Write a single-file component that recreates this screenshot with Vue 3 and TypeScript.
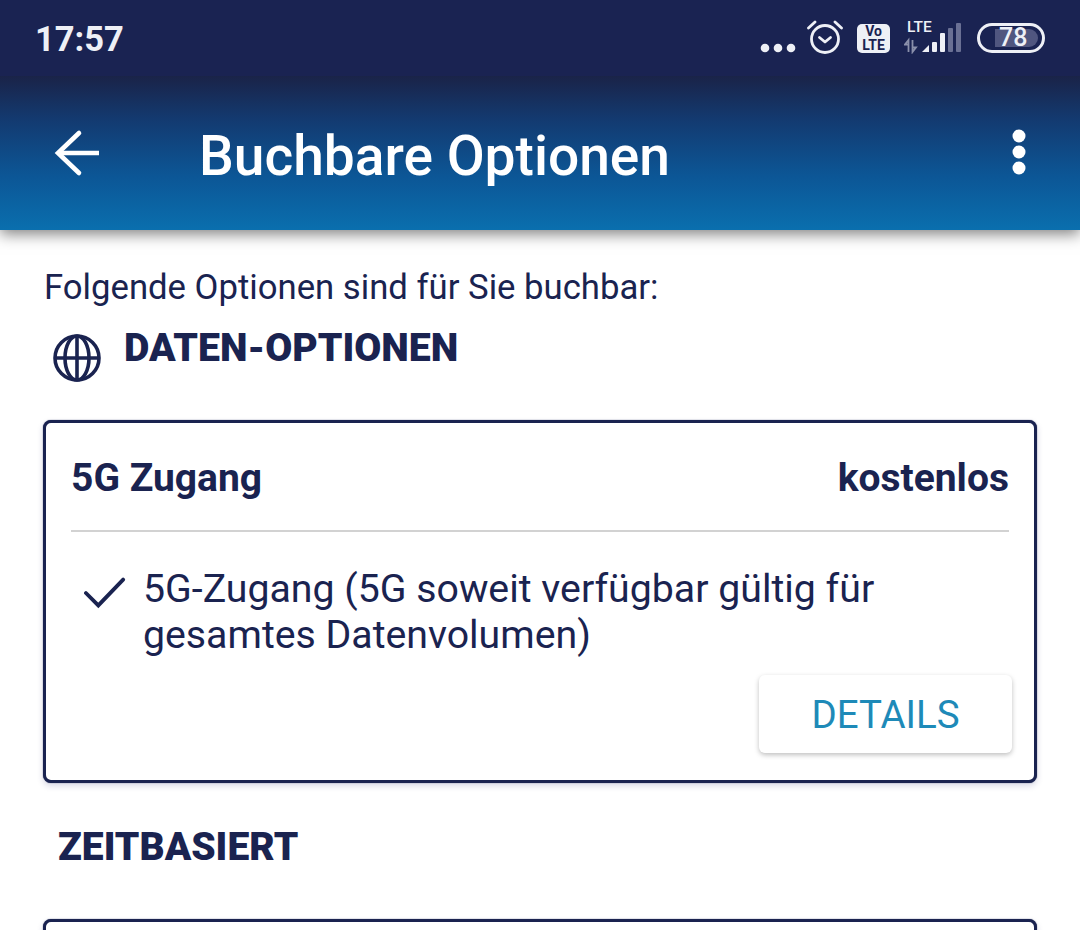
<template>
  <div class="screen">
    <div class="status-bar">
      <span class="clock">17:57</span>
      <div class="status-icons">
        <svg class="dots" width="36" height="12" viewBox="0 0 36 12"><circle cx="5" cy="6" r="4.3" /><circle cx="18" cy="6" r="4.3" /><circle cx="31" cy="6" r="4.3" /></svg>
        <svg class="alarm" width="36" height="36" viewBox="0 0 36 36" fill="none" stroke="#eef0f6" stroke-width="2.8" stroke-linecap="round" stroke-linejoin="round">
          <circle cx="18" cy="19" r="13.5" />
          <path d="M12.5 17.5 18 22l5.5-4.5" />
          <path d="M1.5 8 8 2M34.5 8 28 2" />
        </svg>
        <div class="volte"><span>Vo</span><span>LTE</span></div>
        <div class="signal">
          <span class="signal-label">LTE</span>
          <svg width="58" height="34" viewBox="0 0 58 34" class="signal-svg">
            <path d="M4.5 32V20L1 24.5H4.5M8.5 20V32l3.5-4.5H8.5" fill="none" stroke="#8a90ab" stroke-width="1.8" />
            <path d="M18 32l7-7v7z" fill="#eef0f6" />
            <rect x="28" y="22" width="5" height="10" rx="1" fill="#eef0f6" />
            <rect x="36" y="13" width="5" height="19" rx="1" fill="#eef0f6" />
            <rect x="44" y="8" width="5" height="24" rx="1" fill="#6a7094" />
            <rect x="52" y="3" width="5" height="29" rx="1" fill="#6a7094" />
          </svg>
        </div>
        <div class="battery">
          <div class="battery-fill">78</div>
        </div>
      </div>
    </div>

    <header class="app-bar">
      <svg class="back" width="48" height="48" viewBox="0 0 48 48" fill="none" stroke="#fff" stroke-width="4.6">
        <path d="M4 24h41" />
        <path d="M25 4 4 24l21 20" stroke-linecap="round" />
      </svg>
      <h1 class="title">Buchbare Optionen</h1>
      <svg class="more" width="14" height="46" viewBox="0 0 14 46"><circle cx="7" cy="7" r="6.5" /><circle cx="7" cy="23" r="6.5" /><circle cx="7" cy="39" r="6.5" /></svg>
    </header>

    <main class="content">
      <p class="intro">Folgende Optionen sind für Sie buchbar:</p>

      <div class="section-head">
        <svg class="globe" width="48" height="48" viewBox="0 0 48 48" fill="none" stroke="#1a2350" stroke-width="3.6">
          <circle cx="24" cy="24" r="22" />
          <ellipse cx="24" cy="24" rx="12" ry="22" />
          <path d="M24 2v44M2 24h44" />
        </svg>
        <h2 class="section-title">DATEN-OPTIONEN</h2>
      </div>

      <section class="card">
        <div class="card-head">
          <span>5G Zugang</span>
          <span>kostenlos</span>
        </div>
        <div class="feature">
          <svg class="check" width="42" height="32" viewBox="0 0 44 32" fill="none" stroke="#1a2350" stroke-width="4" stroke-linecap="round">
            <path d="M2 16 15 29 41 2" />
          </svg>
          <p class="feature-text">5G-Zugang (5G soweit verfügbar gültig für gesamtes Datenvolumen)</p>
        </div>
        <div class="card-actions">
          <button class="details-btn">DETAILS</button>
        </div>
      </section>

      <h2 class="section-title section-title--plain">ZEITBASIERT</h2>

      <section class="card card--next"></section>
    </main>
  </div>
</template>

<script setup lang="ts">
</script>

<style>
html, body {
  margin: 0;
  height: 930px;
  overflow: hidden;
  background: #fff;
}
</style>

<style scoped>
.screen {
  width: 1080px;
  height: 930px;
  overflow: hidden;
  font-family: Roboto, "Liberation Sans", sans-serif;
  color: #1a2350;
  background: #fff;
}

/* status bar */
.status-bar {
  height: 76px;
  box-sizing: border-box;
  background: #1a2352;
  display: flex;
  align-items: center;
  justify-content: space-between;
  padding: 0 35px;
  color: #eef0f6;
  position: relative;
  z-index: 1;
}
.clock {
  font-size: 34.5px;
  font-weight: 700;
  margin-top: 2px;
}
.status-icons {
  display: flex;
  align-items: center;
}
.dots {
  fill: #eef0f6;
  margin-top: 20px;
}
.alarm {
  margin-left: 11px;
}
.volte {
  margin-left: 14px;
  width: 33px;
  height: 29px;
  background: #eef0f6;
  border-radius: 5px;
  color: #1a2352;
  font-size: 14px;
  font-weight: 700;
  line-height: 14px;
  text-align: center;
  display: flex;
  flex-direction: column;
  justify-content: center;
}
.signal {
  position: relative;
  margin: -2px 0 0 14px;
  width: 58px;
  height: 34px;
}
.signal-label {
  position: absolute;
  left: 3px;
  top: -1px;
  font-size: 15.5px;
  font-weight: 500;
  line-height: 16px;
}
.signal-svg {
  display: block;
}
.battery {
  margin-left: 15px;
  width: 68px;
  height: 30px;
  box-sizing: border-box;
  border: 3px solid #eef0f6;
  border-radius: 15px;
  padding: 3px 4px 3px 15px;
}
.battery-fill {
  height: 18px;
  background: #50567f;
  border-radius: 0 9px 9px 0;
  font-size: 25px;
  font-weight: 500;
  line-height: 18px;
  padding-left: 4px;
}

/* app bar */
.app-bar {
  height: 154px;
  box-sizing: border-box;
  background: linear-gradient(180deg, #1a2348 0%, #133a70 28%, #0c5696 65%, #0a6fae 100%);
  box-shadow: 0 4px 14px rgba(0, 0, 0, 0.5);
  display: flex;
  align-items: center;
  padding: 0 54px;
  position: relative;
}
.back {
  margin-top: -1px;
}
.title {
  flex: 1;
  margin: 6px 0 0 97px;
  font-size: 55.1px;
  font-weight: 500;
  color: #fff;
}
.more {
  fill: #fff;
  margin-top: -2px;
}

/* content */
.content {
  padding: 36px 43px 0 44px;
}
.intro {
  margin: 0;
  font-size: 34.7px;
  line-height: 42px;
}
.section-head {
  display: flex;
  align-items: flex-start;
  margin-top: 20px;
  padding-left: 9px;
}
.globe {
  margin-top: 6px;
}
.section-title {
  margin: 0;
  font-size: 39px;
  font-weight: 900;
  line-height: 44px;
}
.section-head .section-title {
  margin-left: 23px;
  margin-top: -2px;
  font-size: 39.2px;
}
.section-title--plain {
  margin: 42px 0 50px 14px;
}
.card {
  margin: 38px 0 0 -1px;
  box-sizing: border-box;
  width: 994px;
  height: 363px;
  border: 3px solid #1a2350;
  border-radius: 8px;
  background: #fff;
  box-shadow: 0 0 1px #1a2350, 0 3px 6px rgba(40, 40, 110, 0.18);
  padding: 0 25px;
}
.card--next {
  margin-top: 0;
}
.card-head {
  display: flex;
  justify-content: space-between;
  box-sizing: border-box;
  height: 109px;
  padding-top: 2px;
  align-items: center;
  border-bottom: 2px solid #d2d2d2;
  font-size: 39px;
  font-weight: 700;
}
.feature {
  display: flex;
  margin-top: 35px;
}
.check {
  margin: 10px 0 0 13px;
  flex: none;
}
.feature-text {
  margin: -1px 0 0 17px;
  font-size: 39.25px;
  line-height: 46px;
  width: 800px;
}
.card-actions {
  display: flex;
  justify-content: flex-end;
  margin: 17px -28px 0 0;
  padding-right: 25px;
}
.details-btn {
  width: 253px;
  height: 78px;
  border: none;
  border-radius: 6px;
  background: #fff;
  box-shadow: 0 2px 5px rgba(0, 0, 0, 0.25);
  font-family: inherit;
  font-size: 38.5px;
  color: #1e8ab8;
  padding: 0;
}
</style>
